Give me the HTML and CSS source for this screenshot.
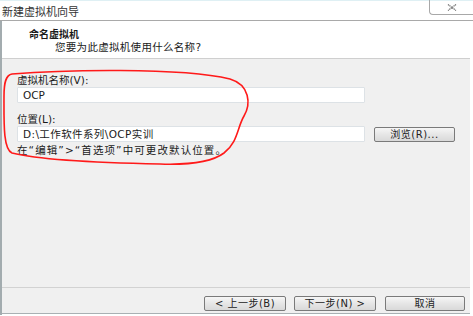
FILE: index.html
```html
<!DOCTYPE html>
<html lang="zh">
<head>
<meta charset="utf-8">
<title>新建虚拟机向导</title>
<link rel="stylesheet" href="styles.css">
</head>
<body>
<div class="window">
  <div class="titlebar">
    <span class="title">新建虚拟机向导</span>
    <div class="close">
      <svg width="10" height="7" viewBox="0 0 10 7"><path d="M1 0.5 L9 6.5 M9 0.5 L1 6.5" stroke="#6a6a6a" stroke-width="1.2" stroke-dasharray="1.2 0.6" fill="none"/></svg>
    </div>
  </div>
  <div class="frame">
    <div class="header">
      <div class="h-title">命名虚拟机</div>
      <div class="h-sub">您要为此虚拟机使用什么名称?</div>
    </div>
    <div class="content">
      <div class="label">虚拟机名称(V):</div>
      <div class="row"><div class="input">OCP</div></div>
      <div class="label second">位置(L):</div>
      <div class="row">
        <div class="input path">D:\工作软件系列\OCP实训</div>
        <div class="btn browse">浏览(R)...</div>
      </div>
      <div class="hint">在“编辑”&gt;“首选项”中可更改默认位置。</div>
    </div>
    <div class="footer">
      <div class="btn nav">&lt; 上一步(B)</div>
      <div class="btn nav">下一步(N) &gt;</div>
      <div class="btn nav cancel">取消</div>
    </div>
  </div>
  <svg class="mark" width="473" height="316" viewBox="0 0 473 316">
    <path d="M12 74 C60 70 180 67 230 79 C250 85 251 104 244 116 C237 128 238 142 224 153 C212 162 190 165 160 164 C110 163 40 160 12 153 C3 149 4 122 4 96 C4 82 6 75 12 74 Z" fill="none" stroke="#ff1a1a" stroke-width="1.6"/>
  </svg>
</div>
</body>
</html>
```
FILE: styles.css
```css
html, body {
  margin: 0;
  padding: 0;
  background: #ffffff;
}
body {
  font-family: "DejaVu Sans", "Noto Sans CJK SC", sans-serif;
  font-size: 10.5px;
  color: #1a1a1a;
  width: 473px;
  height: 316px;
  overflow: hidden;
}
.window {
  position: relative;
  width: 473px;
  height: 316px;
}
.titlebar {
  height: 21px;
  border-top: 1px solid #dff0f4;
  box-sizing: border-box;
  border-bottom: 1px solid #a9a9a9;
  display: flex;
  align-items: flex-start;
  background: #ffffff;
}
.title {
  margin-left: 2px;
  margin-top: 6px;
  font-size: 11px;
  line-height: 12px;
  color: #333;
}
.close {
  margin-left: auto;
  width: 43px;
  height: 14px;
  border-left: 1px solid #a8a8a8;
  border-bottom: 1px solid #a8a8a8;
  border-bottom-left-radius: 4px;
  display: flex;
  align-items: center;
  justify-content: center;
  margin-top: -1px;
}
.frame {
  width: 468px;
  height: 294px;
  border-left: 2px solid #a3acaf;
  display: flex;
  flex-direction: column;
}
.header {
  height: 37px;
  flex: none;
  background: #ffffff;
  border-bottom: 1px solid #cfcfcf;
  padding-left: 27px;
  box-sizing: content-box;
}
.h-title {
  font-weight: bold;
  font-size: 10px;
  line-height: 12px;
  margin-top: 8px;
}
.h-sub {
  font-size: 10.5px;
  line-height: 12px;
  padding-left: 26px;
  letter-spacing: 0.3px;
}
.content {
  flex: 1;
  background: #f0f0f0;
  padding: 15px 0 0 15px;
}
.label {
  line-height: 12px;
  height: 12px;
  margin-bottom: 1px;
}
.label.second {
  margin-top: 10px;
}
.row {
  display: flex;
  align-items: center;
  gap: 9px;
}
.input {
  height: 14px;
  border: 1px solid #dde2e6;
  border-radius: 1px;
  background: #ffffff;
  line-height: 14px;
  padding-left: 5px;
  box-sizing: content-box;
  width: 341px;
}
.path {
  letter-spacing: 0.4px;
}
.btn {
  height: 13px;
  border: 1px solid #7a7a7a;
  border-radius: 2px;
  background: linear-gradient(#f6f6f6, #e6e6e6 50%, #d9d9d9);
  font-size: 10px;
  line-height: 13px;
  text-align: center;
  color: #222;
  letter-spacing: 0.5px;
}
.browse {
  width: 79px;
  margin-top: 1px;
}
.hint {
  margin-top: 2px;
  line-height: 12px;
  letter-spacing: 1.1px;
}
.footer {
  flex: none;
  border-top: 1px solid #d2d2d2;
  border-bottom: 1px solid #a9b0b3;
  background: #f0f0f0;
  display: flex;
  justify-content: flex-end;
  align-items: flex-start;
  padding-top: 8px;
  padding-right: 5px;
  box-sizing: border-box;
  height: 27px;
  gap: 8px;
  margin-bottom: 1px;
}
.nav {
  width: 80px;
}
.cancel {
  width: 78px;
  margin-left: 1px;
}
.mark {
  position: absolute;
  left: 0;
  top: 0;
  pointer-events: none;
}
```
